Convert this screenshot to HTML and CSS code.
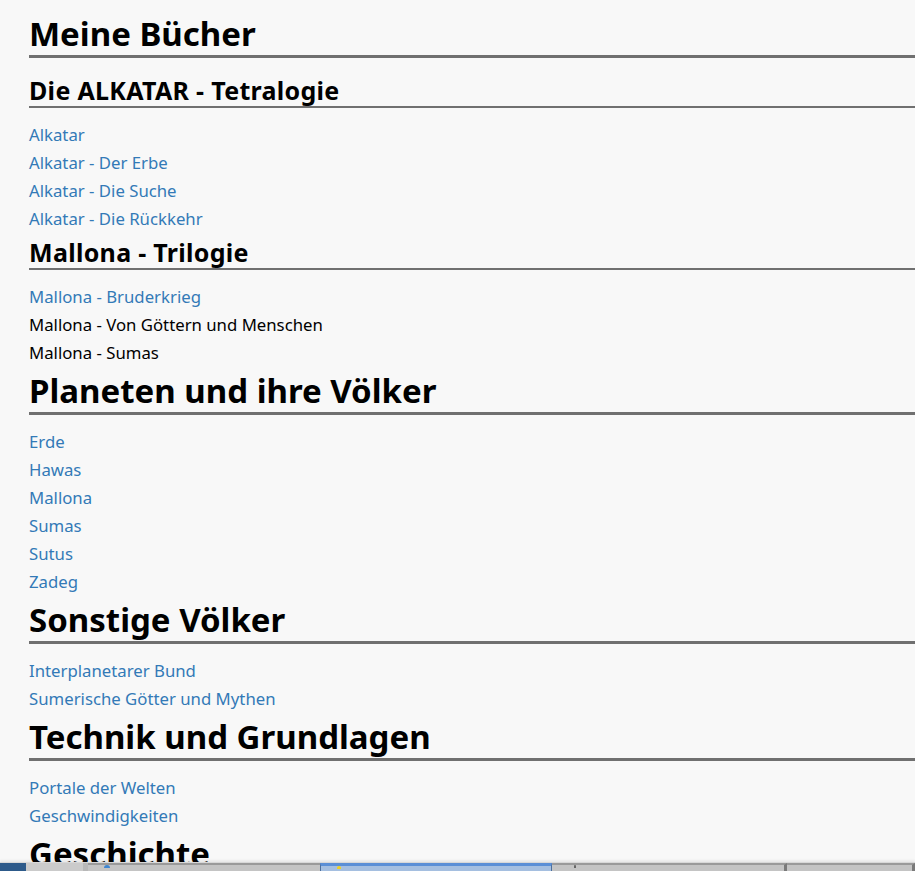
FILE: index.html
```html
<!DOCTYPE html>
<html lang="de">
<head>
    <meta charset="UTF-8">
    <meta name="viewport" content="width=device-width, initial-scale=1.0">
    <title>Meine Bücher</title>
    <link rel="stylesheet" href="styles.css">
</head>
<body>
    <main class="page">
        <h1 class="section-title">Meine Bücher</h1>

        <h2 class="series-title">Die ALKATAR - Tetralogie</h2>
        <ul class="book-list">
            <li><a href="#">Alkatar</a></li>
            <li><a href="#">Alkatar - Der Erbe</a></li>
            <li><a href="#">Alkatar - Die Suche</a></li>
            <li><a href="#">Alkatar - Die Rückkehr</a></li>
        </ul>

        <h2 class="series-title">Mallona - Trilogie</h2>
        <ul class="book-list">
            <li><a href="#">Mallona - Bruderkrieg</a></li>
            <li>Mallona - Von Göttern und Menschen</li>
            <li>Mallona - Sumas</li>
        </ul>

        <h1 class="section-title">Planeten und ihre Völker</h1>
        <ul class="book-list">
            <li><a href="#">Erde</a></li>
            <li><a href="#">Hawas</a></li>
            <li><a href="#">Mallona</a></li>
            <li><a href="#">Sumas</a></li>
            <li><a href="#">Sutus</a></li>
            <li><a href="#">Zadeg</a></li>
        </ul>

        <h1 class="section-title">Sonstige Völker</h1>
        <ul class="book-list">
            <li><a href="#">Interplanetarer Bund</a></li>
            <li><a href="#">Sumerische Götter und Mythen</a></li>
        </ul>

        <h1 class="section-title">Technik und Grundlagen</h1>
        <ul class="book-list">
            <li><a href="#">Portale der Welten</a></li>
            <li><a href="#">Geschwindigkeiten</a></li>
        </ul>

        <h1 class="section-title">Geschichte</h1>
    </main>

    <div class="taskbar">
        <div class="tb-start"></div>
        <div class="tb-tray"></div>
        <div class="tb-task"><span class="tb-icon tb-icon-blue"></span></div>
        <div class="tb-task tb-active"><span class="tb-icon tb-icon-star"></span></div>
        <div class="tb-task"><span class="tb-icon tb-icon-dark"></span></div>
        <div class="tb-task tb-last"></div>
    </div>
</body>
</html>
```

FILE: styles.css
```css
html, body {
    margin: 0;
    padding: 0;
    background-color: #f8f8f8;
}

body {
    font-family: "Noto Sans", "Open Sans", sans-serif;
    color: #000;
}

.page {
    padding: 10px 0 40px 29px;
}

.section-title {
    margin: 0 0 13px;
    padding: 4px 0 1px;
    font-size: 33px;
    line-height: 40px;
    font-weight: bold;
    border-bottom: 3px solid #707070;
}

.series-title {
    margin: 0 0 13px;
    padding: 4px 0 1px;
    font-size: 25px;
    line-height: 30px;
    font-weight: bold;
    letter-spacing: 0.3px;
    border-bottom: 2px solid #707070;
}

.book-list {
    list-style: none;
    margin: 0;
    padding: 0;
    font-size: 16.75px;
    line-height: 28px;
}

.book-list a {
    color: #337ab7;
    text-decoration: none;
}

/* Fenster-Taskleiste am unteren Rand */
.taskbar {
    position: fixed;
    left: 0;
    right: 0;
    bottom: 0;
    height: 8px;
    display: flex;
    background: #c4c4c4;
    border-top: 1px solid #d8d8d8;
    box-shadow: 0 -2px 2px rgba(0, 0, 0, 0.06);
}

.tb-start {
    width: 26px;
    background: #2d5a8a;
}

.tb-tray {
    width: 57px;
    background: #cbcbcb;
    border-right: 5px solid #b8b8b8;
}

.tb-task {
    width: 232px;
    border-top: 2px solid #9a9a9a;
    background: #c4c4c4;
    position: relative;
}

.tb-active {
    background: #a5bfe0;
    border-top: 3px solid #5b8fd6;
    border-left: 1px solid #4c6f9d;
    border-right: 1px solid #4c6f9d;
    width: 230px;
}

.tb-task + .tb-task:not(.tb-active) {
    border-right: 3px solid #7a7a7a;
}

.tb-last {
    flex: 1;
}

.tb-task.tb-last {
    border-right: none;
}

.tb-icon {
    position: absolute;
    top: 0;
    width: 6px;
    height: 3px;
    border-radius: 3px 3px 0 0;
}

.tb-icon-blue {
    left: 16px;
    background: #3f86d0;
}

.tb-icon-star {
    left: 16px;
    background: #f0d020;
    width: 4px;
}

.tb-icon-dark {
    left: 22px;
    width: 2px;
    background: #666;
}
```
